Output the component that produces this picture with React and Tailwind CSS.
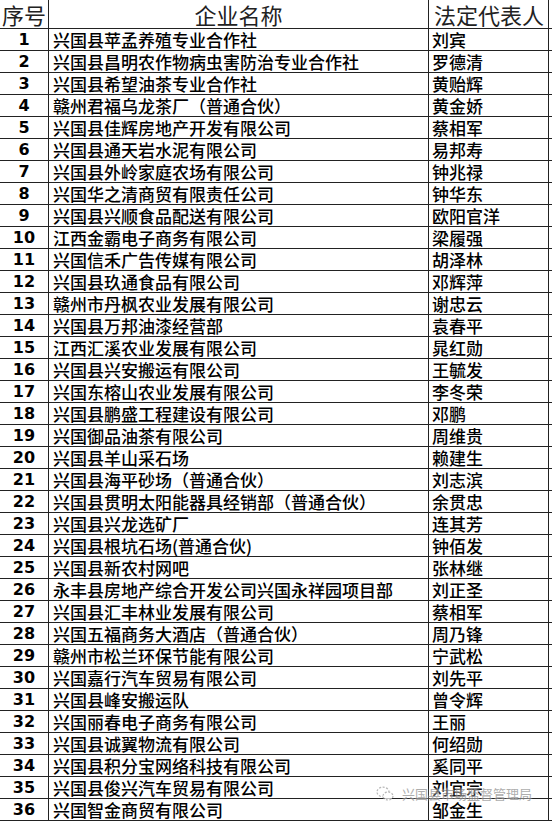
import React from "react";

const rows = [
  ["兴国县苹孟养殖专业合作社", "刘宾"],
  ["兴国县昌明农作物病虫害防治专业合作社", "罗德清"],
  ["兴国县希望油茶专业合作社", "黄贻辉"],
  ["赣州君福乌龙茶厂（普通合伙）", "黄金娇"],
  ["兴国县佳辉房地产开发有限公司", "蔡相军"],
  ["兴国县通天岩水泥有限公司", "易邦寿"],
  ["兴国县外岭家庭农场有限公司", "钟兆禄"],
  ["兴国华之清商贸有限责任公司", "钟华东"],
  ["兴国县兴顺食品配送有限公司", "欧阳官洋"],
  ["江西金霸电子商务有限公司", "梁履强"],
  ["兴国信禾广告传媒有限公司", "胡泽林"],
  ["兴国县玖通食品有限公司", "邓辉萍"],
  ["赣州市丹枫农业发展有限公司", "谢忠云"],
  ["兴国县万邦油漆经营部", "袁春平"],
  ["江西汇溪农业发展有限公司", "晁红勋"],
  ["兴国县兴安搬运有限公司", "王毓发"],
  ["兴国东榕山农业发展有限公司", "李冬荣"],
  ["兴国县鹏盛工程建设有限公司", "邓鹏"],
  ["兴国御品油茶有限公司", "周维贵"],
  ["兴国县羊山采石场", "赖建生"],
  ["兴国县海平砂场（普通合伙）", "刘志滨"],
  ["兴国县贯明太阳能器具经销部（普通合伙）", "余贯忠"],
  ["兴国县兴龙选矿厂", "连其芳"],
  ["兴国县根坑石场(普通合伙)", "钟佰发"],
  ["兴国县新农村网吧", "张林继"],
  ["永丰县房地产综合开发公司兴国永祥园项目部", "刘正圣"],
  ["兴国县汇丰林业发展有限公司", "蔡相军"],
  ["兴国五福商务大酒店（普通合伙）", "周乃锋"],
  ["赣州市松兰环保节能有限公司", "宁武松"],
  ["兴国嘉行汽车贸易有限公司", "刘先平"],
  ["兴国县峰安搬运队", "曾令辉"],
  ["兴国丽春电子商务有限公司", "王丽"],
  ["兴国县诚翼物流有限公司", "何绍勋"],
  ["兴国县积分宝网络科技有限公司", "奚同平"],
  ["兴国县俊兴汽车贸易有限公司", "刘宜宗"],
  ["兴国智金商贸有限公司", "邹金生"],
];

const cjk = { fontFamily: '"Noto Sans CJK SC", "Noto Sans", sans-serif' };
const num = { fontFamily: '"DejaVu Sans", "Liberation Sans", sans-serif' };

export default function App() {
  return (
    <div className="relative w-[552px] h-[822px] bg-white overflow-hidden text-black">
      <div className="grid grid-cols-[49px_380px_120px] h-[29px] border-b border-[#222]" style={cjk}>
        <div className="border-r border-[#222] text-[22px] leading-[28px] pl-[2px] text-[#222] whitespace-nowrap">序号</div>
        <div className="border-r border-[#222] text-[22px] leading-[28px] text-center text-[#222]">企业名称</div>
        <div className="border-r border-[#222] text-[22px] leading-[28px] pl-[5px] text-[#222] whitespace-nowrap">法定代表人</div>
      </div>
      {rows.map(([name, person], i) => (
        <div key={i} className="grid grid-cols-[49px_380px_120px] h-[22px] border-b border-[#222]">
          <div className="border-r border-[#222] text-center font-bold text-[16px] leading-[21px]" style={num}>{i + 1}</div>
          <div className="border-r border-[#222] pl-[4px] text-[17px] leading-[21px] font-medium whitespace-nowrap" style={cjk}>{name}</div>
          <div className="border-r border-[#222] pl-[3px] text-[17px] leading-[21px] font-medium whitespace-nowrap" style={cjk}>{person}</div>
        </div>
      ))}
      <div className="absolute left-[376px] top-[786px] flex items-center gap-[8px] opacity-70 pointer-events-none">
        <svg width="18" height="16" viewBox="0 0 18 16" fill="none" stroke="#9a9a9a" strokeWidth="1.2">
          <ellipse cx="7" cy="6" rx="6" ry="4.8" strokeDasharray="2 1.5" />
          <ellipse cx="12" cy="10" rx="5" ry="4" fill="white" strokeDasharray="2 1.5" />
        </svg>
        <span className="text-[13px] leading-[16px] text-[#8c8c8c] whitespace-nowrap" style={{ ...cjk, textShadow: "0 0 2px #fff, 0 0 2px #fff" }}>兴国县市场监督管理局</span>
      </div>
    </div>
  );
}
